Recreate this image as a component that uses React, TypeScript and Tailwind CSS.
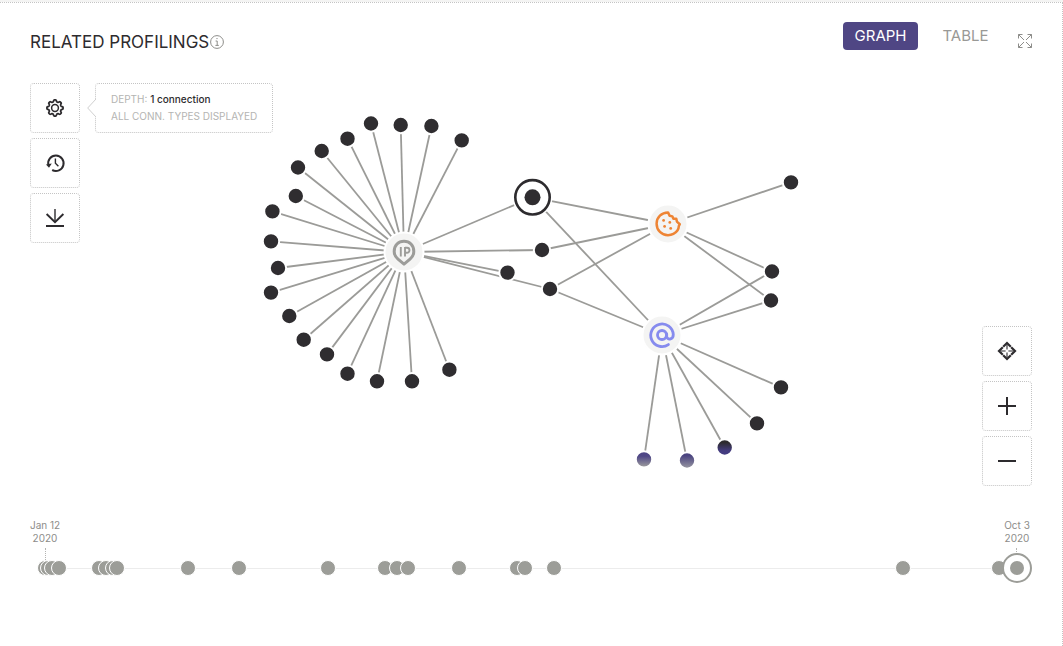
import type { ReactNode } from "react";

type Point = [number, number];

const IP: Point = [404, 252];
const COOKIE: Point = [668, 224];
const EMAIL: Point = [662, 335];
const MAIN: Point = [532.5, 197.3];

const ipProfiles: Point[] = [
  [461.7, 140.4], [431.4, 126], [400.7, 125], [371, 123.5], [347.5, 138.7], [321.7, 151],
  [298, 167.5], [295.8, 196], [272.4, 211.4], [271, 241.4], [278, 268], [271, 292.6],
  [289.3, 316], [303.7, 339.7], [327, 354.4], [347.5, 373.7], [377, 381.3], [412, 381.3],
  [449.4, 369.7], [507.5, 272.6],
];
const bridgeA: Point = [542, 250];
const bridgeB: Point = [550, 289];
const sharedA: Point = [772, 271.5];
const sharedB: Point = [771, 300.5];
const cookieOnly: Point = [791, 182.4];
const emailProfiles: Point[] = [[781, 387.4], [757, 423.4]];
const fadingProfiles: { at: Point; fill: string }[] = [
  { at: [724.7, 447.5], fill: "url(#fade-dark)" },
  { at: [687, 460.5], fill: "url(#fade-mid)" },
  { at: [644, 459.4], fill: "url(#fade-light)" },
];

const edges: [Point, Point][] = [
  ...[...ipProfiles, MAIN, bridgeA, bridgeB].map((p): [Point, Point] => [IP, p]),
  ...[MAIN, bridgeA, bridgeB, cookieOnly, sharedA, sharedB].map((p): [Point, Point] => [COOKIE, p]),
  ...[MAIN, bridgeB, sharedA, sharedB, ...emailProfiles, ...fadingProfiles.map((f) => f.at)].map(
    (p): [Point, Point] => [EMAIL, p],
  ),
];
const profiles: Point[] = [...ipProfiles, bridgeA, bridgeB, sharedA, sharedB, cookieOnly, ...emailProfiles];

/* Offsets of the events along the range. */
const RANGE = 972;
const events = [0, 3, 7, 14, 54, 61, 68, 72, 143, 194, 283, 340, 352, 363, 414, 472, 480, 509, 858, 954];

const gearOutline =
  Array.from({ length: 96 }, (_, i) => {
    const a = (i / 96) * Math.PI * 2;
    const r = 7.2 + 0.9 * Math.tanh(2 * Math.cos(8 * a));
    return `${i ? "L" : "M"}${(9 + r * Math.cos(a)).toFixed(2)} ${(9 + r * Math.sin(a)).toFixed(2)}`;
  }).join("") + "Z";

function Icon({ children, width = 2 }: { children: ReactNode; width?: number }) {
  return (
    <svg viewBox="0 0 18 18" className="size-[18px] overflow-visible" fill="none" stroke="currentColor" strokeWidth={width} aria-hidden="true">
      {children}
    </svg>
  );
}

function ToolButton({ label, children }: { label: string; children: ReactNode }) {
  return (
    <button
      type="button"
      aria-label={label}
      className="flex size-[50px] items-center justify-center rounded border border-dotted border-[#c4c4c4] bg-white text-[#2d2b2e]"
    >
      {children}
    </button>
  );
}

function Graph() {
  return (
    <svg viewBox="30 83 1002 403" className="col-start-1 row-start-1 w-full" role="img" aria-label="Related profilings graph">
      <defs>
        <linearGradient id="fade-dark" x1="0" y1="0" x2="0" y2="1">
          <stop offset="0.2" stopColor="#2d2b2e" />
          <stop offset="0.7" stopColor="#443c80" />
        </linearGradient>
        <linearGradient id="fade-mid" x1="0" y1="0" x2="0" y2="1">
          <stop offset="0.2" stopColor="#4b4480" />
          <stop offset="1" stopColor="#9a9aa2" />
        </linearGradient>
        <linearGradient id="fade-light" x1="0" y1="0" x2="0" y2="1">
          <stop offset="0.3" stopColor="#4f4786" />
          <stop offset="1" stopColor="#a2a29f" />
        </linearGradient>
      </defs>
      <g stroke="#9b9b98" strokeWidth="1.8">
        {edges.map(([a, b], i) => (
          <line key={i} x1={a[0]} y1={a[1]} x2={b[0]} y2={b[1]} />
        ))}
      </g>
      <g stroke="#fff" strokeWidth="2">
        {profiles.map(([x, y]) => (
          <circle key={`${x}-${y}`} cx={x} cy={y} r="8.2" fill="#2f2d30" />
        ))}
        {fadingProfiles.map(({ at, fill }) => (
          <circle key={fill} cx={at[0]} cy={at[1]} r="8.2" fill={fill} />
        ))}
        {[IP, COOKIE, EMAIL].map(([x, y]) => (
          <circle key={x} cx={x} cy={y} r="19.5" fill="#f4f4f3" />
        ))}
      </g>
      <circle cx={MAIN[0]} cy={MAIN[1]} r="20" fill="#fff" />
      <circle cx={MAIN[0]} cy={MAIN[1]} r="17.2" fill="none" stroke="#2d2b2e" strokeWidth="2.6" />
      <circle cx={MAIN[0]} cy={MAIN[1]} r="8" fill="#2f2d30" />

      <g transform="translate(404 252)" fill="none" stroke="#9c9c99" strokeLinejoin="round">
        <path d="M0 12.2 L-6 7.2 C-8.8 4.8-9.8 2.6-9.8-.6 C-9.8-6.6-5.6-10.8 0-10.8 S9.8-6.6 9.8-.6 C9.8 2.6 8.8 4.8 6 7.2Z" strokeWidth="3" />
        <path d="M-3.2-5V4.5M1-5V4.5M1-4.2H3A2.4 2.4 0 0 1 3 .8H1" strokeWidth="1.9" strokeLinejoin="miter" />
      </g>

      <g transform="translate(668 224)" fill="none" stroke="#ee8434" strokeWidth="2.5" strokeLinejoin="round" strokeLinecap="round">
        <path d="M0-11.6C-6.4-11.6-11.4-6.8-11.4-.3C-11.4 6.2-6.3 11.2 0 11.2C4 11.2 7.3 9.5 9.4 6.6C10.3 5.2 10.8 3.6 10.9 1.9L11.8.2L8.9-2.4L8.3-5.2L5.4-5.2L4.4-7.6L1.6-8.2Z" />
        <g fill="#ee8434" stroke="none">
          <circle cx="-4.4" cy="-3.6" r="1.4" />
          <circle cx="1.8" cy="-1.6" r="1.4" />
          <circle cx="-3.4" cy="2.4" r="1.4" />
          <circle cx="2.7" cy="4.4" r="1.4" />
        </g>
      </g>

      <g transform="translate(662 335)" fill="none" stroke="#868bee" strokeWidth="2.8" strokeLinecap="round">
        <circle r="4.5" />
        <path d="M4.7-1V1.2C4.7 5.4 11.3 5 11.3-.4A11.3 11.3 0 1 0 6.4 9.6" />
      </g>
    </svg>
  );
}

function Timeline() {
  return (
    <section aria-label="Timeline" className="mt-[33px] text-[10px] leading-[13px] text-[#8d8d8a]">
      <div className="flex justify-between text-center">
        <time dateTime="2020-01-12" className="w-[30px] whitespace-nowrap">Jan 12<br />2020</time>
        <time dateTime="2020-10-03" className="w-[30px] whitespace-nowrap">Oct 3<br />2020</time>
      </div>
      <div className="relative mx-[15px] flex h-[46px] items-center">
        <div className="absolute top-[3px] left-0 h-3 border-l border-dotted border-[#b4b4b2]" />
        <div className="absolute top-[3px] right-0 h-3 border-l border-dotted border-[#b4b4b2]" />
        <div className="h-px w-full bg-[#ececec]" />
        {events.map((day) => (
          <span
            key={day}
            className="absolute size-4 -translate-x-1/2 rounded-full border border-white bg-[#9c9d98]"
            style={{ left: `${(day / RANGE) * 100}%` }}
          />
        ))}
        <span className="absolute left-full flex size-[30px] -translate-x-1/2 items-center justify-center rounded-full border-2 border-[#9c9d98] bg-white">
          <span className="size-[14px] rounded-full bg-[#9c9d98]" />
        </span>
      </div>
    </section>
  );
}

export default function App() {
  return (
    <div className="flex min-h-screen flex-col bg-[#f4f4f3] pt-[2px] font-['Inter',sans-serif]">
      <main className="grow border-t border-r border-dotted border-[#c4c4c4] bg-white pr-[30px] pb-8 pl-[30px]">
        <header className="flex items-start justify-between pt-[19px] pb-[29px]">
          <div className="mt-2 flex items-center gap-px">
            <h1 className="text-[17px] leading-6 text-[#2d2b2e]">RELATED PROFILINGS</h1>
            <button type="button" aria-label="Information" className="text-[#8d8d8a]">
              <svg viewBox="0 0 14 14" className="size-[14px]" fill="none" stroke="currentColor" strokeWidth="1" aria-hidden="true">
                <circle cx="7" cy="7" r="6.4" />
                <path d="M5.6 6H7.2V10.4M5.4 10.4H8.8M6.4 3.6H7.6" />
              </svg>
            </button>
          </div>
          <div className="flex items-start">
            <button type="button" aria-pressed="true" className="h-7 w-[75px] rounded bg-[#4f4684] text-[15px] text-white">GRAPH</button>
            <button type="button" aria-pressed="false" className="ml-[10px] h-7 w-[75px] text-[15px] text-[#999996]">TABLE</button>
            <button type="button" aria-label="Full screen" className="mt-3 ml-[15px] text-[#8d8d8a]">
              <svg viewBox="0 0 14 14" className="size-[14px]" fill="none" stroke="currentColor" strokeWidth="1" aria-hidden="true">
                <path d="M.5 4.5V.5H4.5M9.5.5H13.5V4.5M13.5 9.5V13.5H9.5M4.5 13.5H.5V9.5M.5.5L6 6M13.5.5L8 6M13.5 13.5L8 8M.5 13.5L6 8" />
              </svg>
            </button>
          </div>
        </header>

        <div className="grid">
          <Graph />
          <div className="z-10 col-start-1 row-start-1 flex items-start justify-self-start">
            <div className="flex flex-col gap-[5px]">
              <ToolButton label="Settings">
                <Icon width={1.8}>
                  <path d={gearOutline} />
                  <circle cx="9" cy="9" r="3.4" strokeWidth="1.5" />
                </Icon>
              </ToolButton>
              <ToolButton label="History">
                <Icon width={2}>
                  <path d="M2.4 11A7.7 7.7 0 1 1 6.2 16" />
                  <path d="M0 10.4L5.8 9.6L3 13.8Z" fill="currentColor" stroke="none" />
                  <path d="M9.4 4.4V9.2L12.4 12.2" strokeWidth="1.4" />
                </Icon>
              </ToolButton>
              <ToolButton label="Download">
                <Icon width={1.9}>
                  <path d="M9 0V13" strokeWidth="1.4" />
                  <path d="M.6 5L9 13.2L17.4 5M0 17H18" />
                </Icon>
              </ToolButton>
            </div>
            <div className="relative ml-[15px] h-[50px] w-[178px] rounded border border-dotted border-[#c4c4c4] bg-white pt-[7px] pl-[15px] text-[10px] leading-[17px] whitespace-nowrap text-[#b4b4b2]">
              <svg viewBox="0 0 9 18" className="absolute top-[15px] -left-[9px] h-[18px] w-[9px]" aria-hidden="true">
                <path d="M9 0L.7 9L9 18" fill="#fff" stroke="#cfcfcf" />
              </svg>
              <p>DEPTH: <span className="font-medium text-[#2d2b2e]">1 connection</span></p>
              <p>ALL CONN. TYPES DISPLAYED</p>
            </div>
          </div>
          <div className="z-10 col-start-1 row-start-1 flex flex-col gap-[5px] self-end justify-self-end">
            <ToolButton label="Fit to view">
              <Icon width={1.1}>
                <path d="M9 3V7.6M9 10.4V15M3 9H7.6M10.4 9H15" />
                <path d="M5.2 4.8L9 1L12.8 4.8M5.2 13.2L9 17L12.8 13.2M4.8 5.2L1 9L4.8 12.8M13.2 5.2L17 9L13.2 12.8" strokeWidth="2.2" />
              </Icon>
            </ToolButton>
            <ToolButton label="Zoom in">
              <Icon><path d="M9 0V18M0 9H18" /></Icon>
            </ToolButton>
            <ToolButton label="Zoom out">
              <Icon><path d="M0 9H18" /></Icon>
            </ToolButton>
          </div>
        </div>

        <Timeline />
      </main>
    </div>
  );
}
